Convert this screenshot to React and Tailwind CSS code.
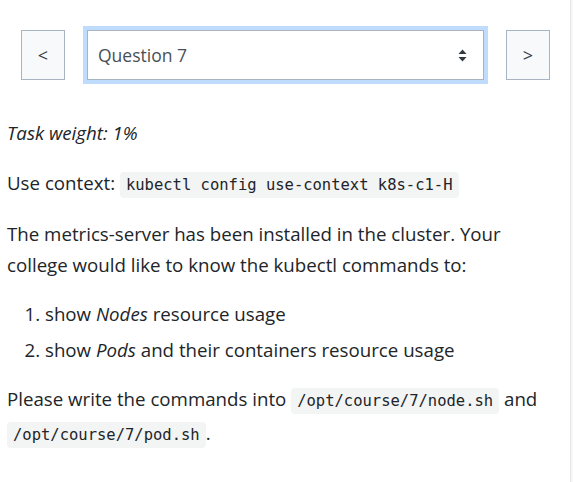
import React from "react";

const code = "bg-[#f3f4f4] rounded-[4px] px-[6px] py-[4px] text-[15.5px] text-[#212529] [font-family:'DejaVu_Sans_Mono',monospace]";

export default function App() {
  return (
    <div className="flex w-[573px] h-[482px] bg-white overflow-hidden text-[#212529] [font-family:'Open_Sans',sans-serif]">
      <div className="flex-1 flex flex-col">
        <div className="flex items-center gap-[22px] pl-[21px] pt-[30px]">
          <button className="w-[44px] h-[50px] border border-[#a9b4c2] bg-[#f8f9fa] text-[18px] text-[#343a40] flex items-center justify-center">&lt;</button>
          <div className="w-[397px] h-[50px] border border-[#a9b4c2] bg-white ring-4 ring-[#bfdcfd] flex items-center justify-between pl-[10px] pr-[16px]">
            <span className="text-[17.5px] text-[#495057]">Question 7</span>
            <svg width="9" height="13" viewBox="0 0 9 13">
              <path d="M4.5 0.5 L8.5 5 L0.5 5 Z" fill="#343a40" />
              <path d="M4.5 12.5 L8.5 8 L0.5 8 Z" fill="#343a40" />
            </svg>
          </div>
          <button className="w-[44px] h-[50px] border border-[#a9b4c2] bg-[#f8f9fa] text-[18px] text-[#343a40] flex items-center justify-center">&gt;</button>
        </div>
        <div className="pl-[7px] w-[560px] pt-[37px] text-[18.7px] leading-[31px]">
          <p className="italic mb-[19px]">Task weight: 1%</p>
          <p className="mb-[17px]">Use context: <code className={code}>kubectl config use-context k8s-c1-H</code></p>
          <p className="mb-[18px]">The metrics-server has been installed in the cluster. Your college would like to know the kubectl commands to:</p>
          <ol className="list-decimal pl-[38px] mb-[18px]">
            <li className="mb-[5px]">show <em>Nodes</em> resource usage</li>
            <li>show <em>Pods</em> and their containers resource usage</li>
          </ol>
          <p>Please write the commands into <code className={code}>/opt/course/7/node.sh</code> and <code className={code}>/opt/course/7/pod.sh</code>.</p>
        </div>
      </div>
      <div className="w-[3px] border-l border-[#e6e6e6] bg-[#f7f7f7]" />
    </div>
  );
}
